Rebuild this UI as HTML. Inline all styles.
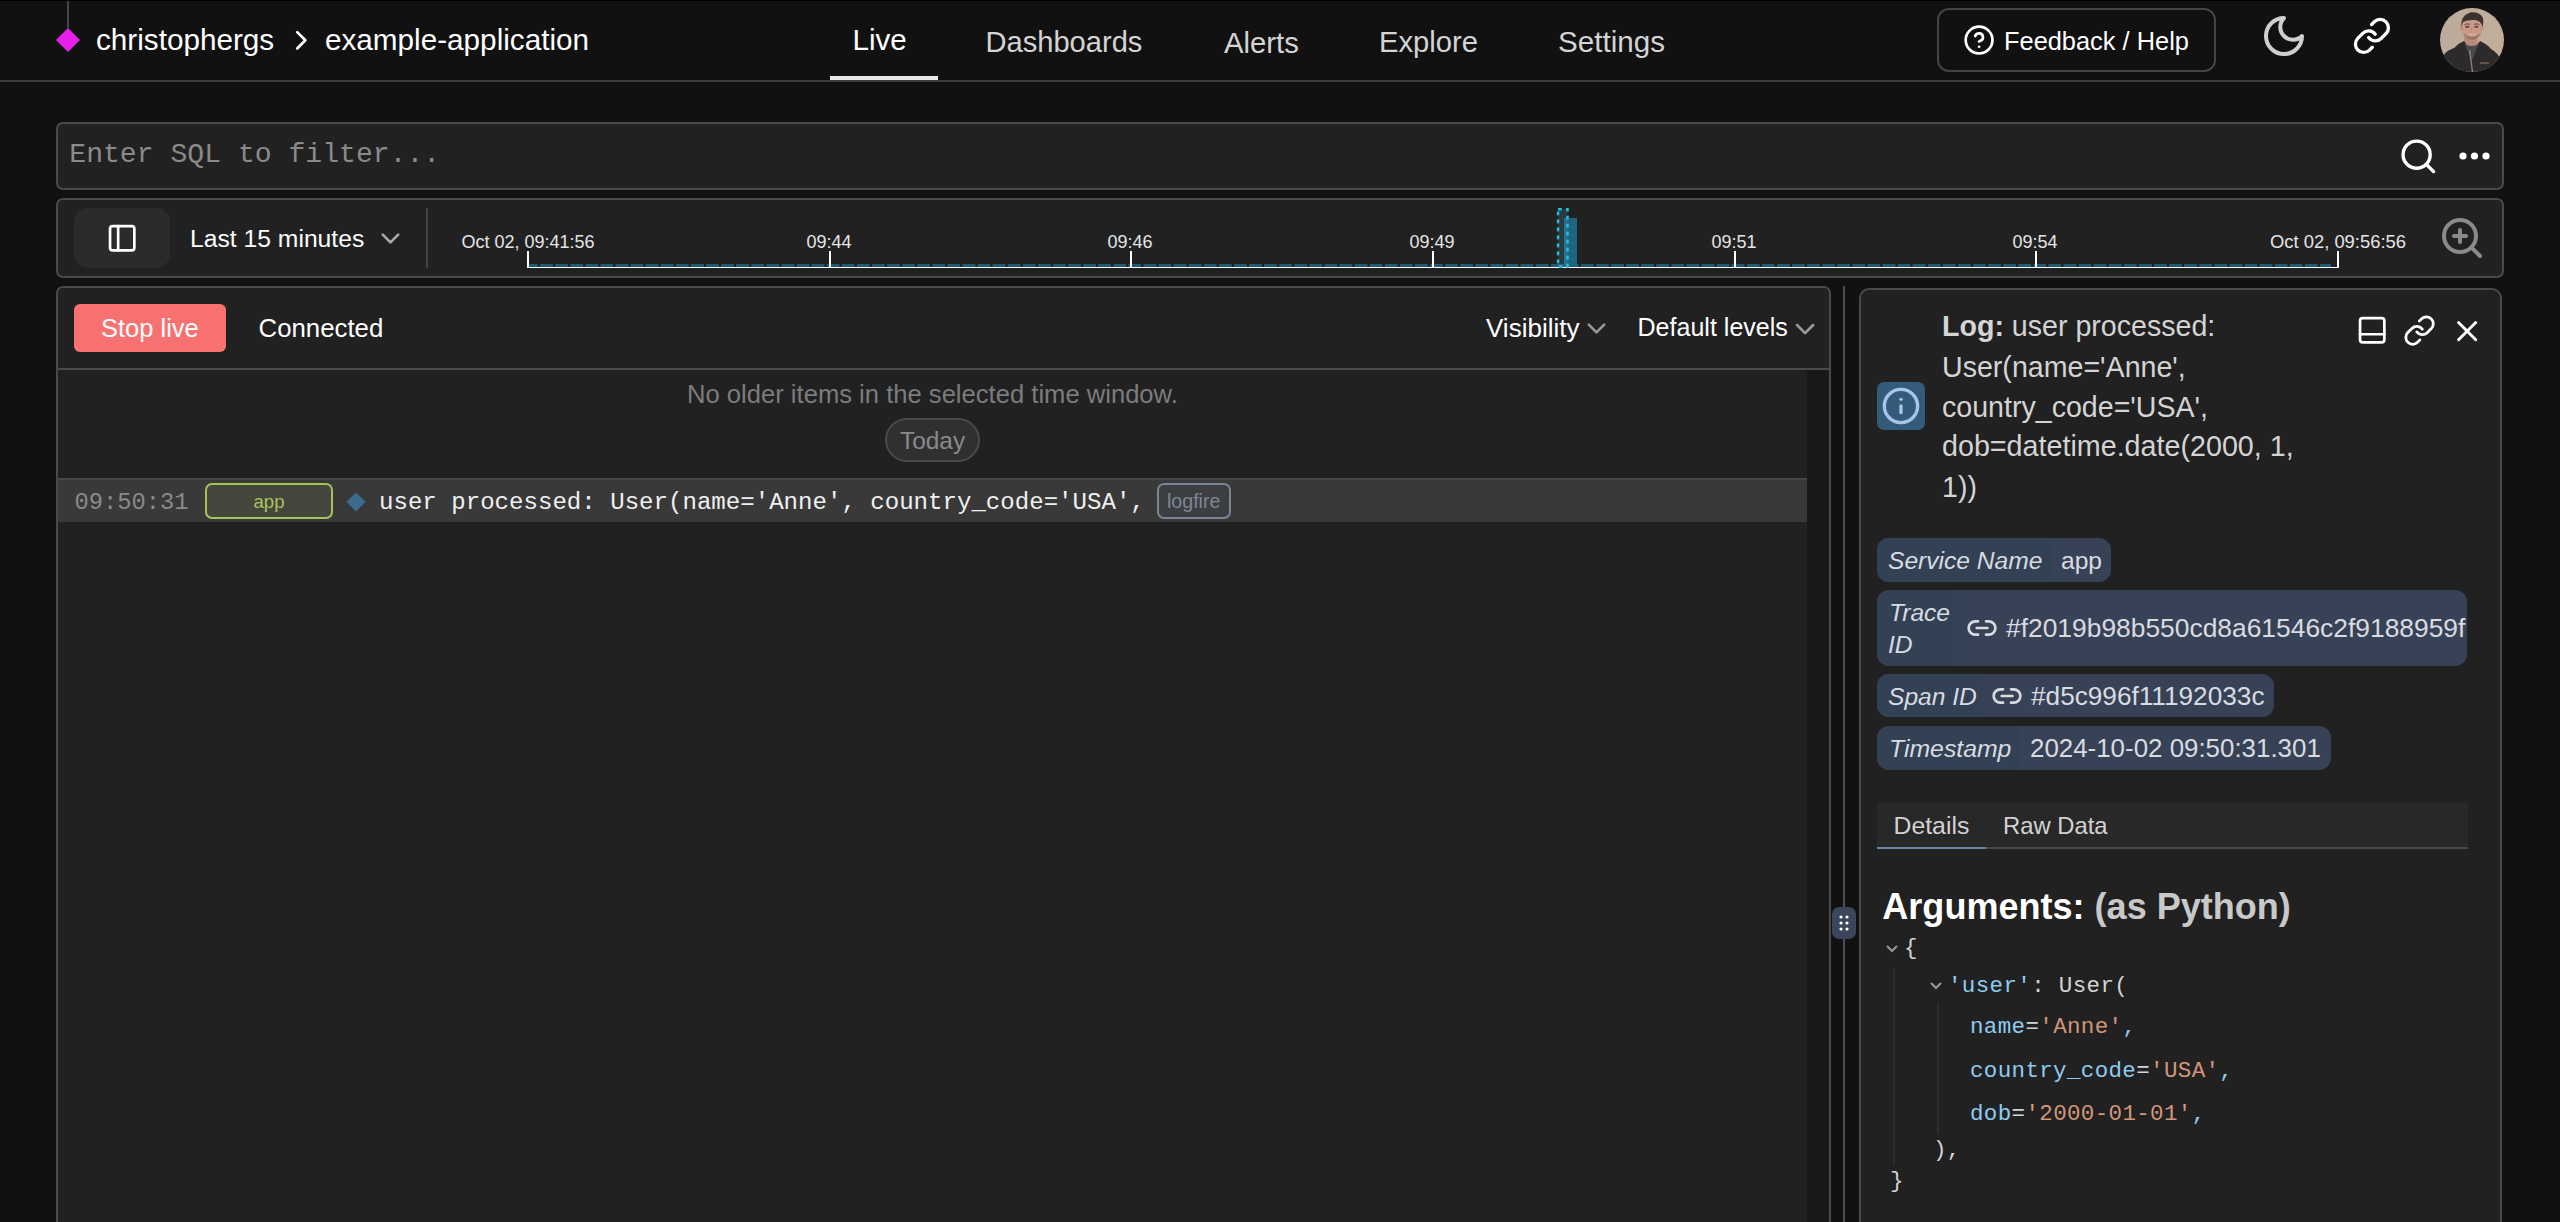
<!DOCTYPE html>
<html><head><meta charset="utf-8"><style>
html,body{margin:0;padding:0;width:2560px;height:1222px;overflow:hidden;background:#111111;}
.r{position:absolute;box-sizing:content-box}
.t{position:absolute;line-height:1;white-space:pre}
.S{font-family:"Liberation Sans",sans-serif}
.M{font-family:"Liberation Mono",monospace}
</style></head><body>
<div class="r" style="left:0px;top:0px;width:2560px;height:1px;background:#000"></div>
<div class="r" style="left:0px;top:80px;width:2560px;height:2px;background:#3c3c3c"></div>
<div class="r" style="left:67px;top:1px;width:2px;height:27px;background:#474747"></div>
<svg class="r" style="left:55px;top:27px" width="26" height="26" viewBox="0 0 26 26" fill="none"><path d="M13 1 L25 13 L13 25 L1 13 Z" fill="#e620ea"/></svg>
<div class="t S" style="left:96px;top:24.85px;font-size:29.7px;color:#fff;font-weight:400;font-style:normal;">christophergs</div>
<svg class="r" style="left:284.60px;top:24.20px" width="32.57" height="32.57" viewBox="0 0 24 24" fill="none" stroke="#fff" stroke-width="2" stroke-linecap="round" stroke-linejoin="round"><path d="m9 18 6-6-6-6"/></svg>
<div class="t S" style="left:325px;top:25.35px;font-size:29.7px;color:#fff;font-weight:400;font-style:normal;">example-application</div>
<div class="t S" style="left:852.5px;top:24.54px;font-size:29.6px;color:#fff;font-weight:400;font-style:normal;">Live</div>
<div class="r" style="left:830px;top:76px;width:108px;height:4px;background:#e5e7eb"></div>
<div class="t S" style="left:985.5px;top:27.86px;font-size:29.1px;color:#d4d4d4;font-weight:400;font-style:normal;">Dashboards</div>
<div class="t S" style="left:1224px;top:27.69px;font-size:29.3px;color:#d4d4d4;font-weight:400;font-style:normal;">Alerts</div>
<div class="t S" style="left:1379px;top:27.78px;font-size:29.2px;color:#d4d4d4;font-weight:400;font-style:normal;">Explore</div>
<div class="t S" style="left:1558px;top:27.44px;font-size:29.6px;color:#d4d4d4;font-weight:400;font-style:normal;">Settings</div>
<div class="r" style="left:1937px;top:8px;width:275px;height:60px;border:2px solid #444;border-radius:12px"></div>
<svg class="r" style="left:1963.20px;top:23.70px" width="32.16" height="32.16" viewBox="0 0 24 24" fill="none" stroke="#fff" stroke-width="2" stroke-linecap="round" stroke-linejoin="round"><circle cx="12" cy="12" r="10"/><path d="M9.09 9a3 3 0 0 1 5.83 1c0 2-3 3-3 3"/><path d="M12 17h.01"/></svg>
<div class="t S" style="left:2004px;top:28.69px;font-size:25.4px;color:#fff;font-weight:400;font-style:normal;">Feedback / Help</div>
<svg class="r" style="left:2260.00px;top:12.00px" width="48.00" height="48.00" viewBox="0 0 24 24" fill="none" stroke="#cfcfcf" stroke-width="2" stroke-linecap="round" stroke-linejoin="round"><path d="M12 3a6 6 0 0 0 9 9 9 9 0 1 1-9-9Z"/></svg>
<svg class="r" style="left:2352.00px;top:15.75px" width="39.84" height="39.84" viewBox="0 0 24 24" fill="none" stroke="#fff" stroke-width="2" stroke-linecap="round" stroke-linejoin="round"><path d="M10 13a5 5 0 0 0 7.54.54l3-3a5 5 0 0 0-7.07-7.07l-1.72 1.71"/><path d="M14 11a5 5 0 0 0-7.54-.54l-3 3a5 5 0 0 0 7.07 7.07l1.71-1.71"/></svg>
<svg class="r" style="left:2440px;top:8px" width="64" height="64" viewBox="0 0 64 64" fill="none"><defs><clipPath id="av"><circle cx="32" cy="32" r="32"/></clipPath><linearGradient id="bg" x1="0" y1="0" x2="1" y2="0"><stop offset="0" stop-color="#bcab9b"/><stop offset="1" stop-color="#c2ae9b"/></linearGradient></defs><g clip-path="url(#av)">
<rect width="64" height="64" fill="url(#bg)"/>
<path d="M24 27 L24 38 Q31 41 38 37 L37 27 Z" fill="#b98a78"/>
<path d="M22 17 Q22 10 32 10 Q42 10 42 17 L41.5 25 Q40 31 32 32 Q24 31 22.5 25 Z" fill="#c99a88"/>
<path d="M23 24 Q25 31 32 32 Q39 31 41 24 Q39 28 32 29 Q25 28 23 24 Z" fill="#8a6a5c" opacity="0.8"/>
<ellipse cx="21.6" cy="20" rx="1.7" ry="2.8" fill="#c08f7d"/><ellipse cx="42.2" cy="20" rx="1.7" ry="2.8" fill="#c08f7d"/>
<path d="M21.5 19 Q20 8 30 4.5 Q40 3.5 43 10 Q44 14 42.5 19 Q41 12.5 35 12 Q27 11.5 23 14 Z" fill="#3b332f"/>
<path d="M27 25.5 Q32 28 37 25.5 Q32 27 27 25.5 Z" fill="#f0e0d8" opacity="0.8"/>
<ellipse cx="27.3" cy="18.8" rx="2.2" ry="1" fill="#5a4038"/><ellipse cx="36.3" cy="18.8" rx="2.1" ry="1" fill="#5a4038"/><path d="M24.5 16.5 Q27 15.3 30 16.3 M34 16.3 Q37 15.3 39.5 16.5" stroke="#5b4a42" stroke-width="1"/><path d="M32 19 L31 24" stroke="#b08070" stroke-width="0.8"/>
<path d="M0 64 L2 50 Q5 43 14 40 Q19 35 24 33 L32 44 L40 33 Q47 36 51 41 Q58 45 61 52 L64 64 Z" fill="#2d2a2b"/>
<path d="M24.5 36 L32 52 L38.5 36 Q32 40 24.5 36 Z" fill="#4a4a4c"/>
<path d="M29.5 42 L32.5 64" stroke="#8c8378" stroke-width="1.4"/>
<rect x="40" y="54" width="9" height="2" fill="#7a6456" opacity="0.7"/>
</g></svg>
<div class="r" style="left:56px;top:122px;width:2444px;height:64px;background:#212121;border:2px solid #4a4a4a;border-radius:7px"></div>
<div class="t M" style="left:69.3px;top:140.97px;font-size:28.1px;color:#8a8a8a;font-weight:400;font-style:normal;">Enter SQL to filter...</div>
<svg class="r" style="left:2397.60px;top:135.60px" width="40.66" height="40.66" viewBox="0 0 24 24" fill="none" stroke="#fff" stroke-width="2" stroke-linecap="round" stroke-linejoin="round"><circle cx="11" cy="11" r="8"/><path d="m21 21-4.3-4.3"/></svg>
<svg class="r" style="left:2456.5px;top:150px" width="38" height="12" viewBox="0 0 38 12" fill="none"><circle cx="6" cy="6" r="3.6" fill="#fff"/><circle cx="17.5" cy="6" r="3.6" fill="#fff"/><circle cx="29" cy="6" r="3.6" fill="#fff"/></svg>
<div class="r" style="left:56px;top:198px;width:2444px;height:76px;background:#212121;border:2px solid #4a4a4a;border-radius:7px"></div>
<div class="r" style="left:74px;top:208px;width:96px;height:60px;background:#2b2b2b;border-radius:14px"></div>
<svg class="r" style="left:105.70px;top:222.30px" width="32.40" height="32.40" viewBox="0 0 24 24" fill="none" stroke="#fff" stroke-width="2" stroke-linecap="round" stroke-linejoin="round"><rect width="18" height="18" x="3" y="3" rx="2"/><path d="M9 3v18"/></svg>
<div class="t S" style="left:190px;top:227.09px;font-size:24.7px;color:#fff;font-weight:400;font-style:normal;">Last 15 minutes</div>
<svg class="r" style="left:375.45px;top:222.50px" width="30.96" height="30.96" viewBox="0 0 24 24" fill="none" stroke="#aaa" stroke-width="2" stroke-linecap="round" stroke-linejoin="round"><path d="m6 9 6 6 6-6"/></svg>
<div class="r" style="left:426px;top:208px;width:2px;height:60px;background:#444"></div>
<svg class="r" style="left:520px;top:200px" width="1830" height="75"><line x1="9" y1="65.5" x2="1811" y2="65.5" stroke="#1f5b72" stroke-width="3" stroke-dasharray="12.9 2.183" stroke-dashoffset="3.98"/><rect x="1044" y="18" width="13" height="49" fill="#1d6480"/><line x1="8" y1="67.5" x2="1819" y2="67.5" stroke="#fff" stroke-width="1"/><line x1="8" y1="51" x2="8" y2="68" stroke="#fff" stroke-width="2"/><line x1="310" y1="51" x2="310" y2="68" stroke="#fff" stroke-width="2"/><line x1="611" y1="51" x2="611" y2="68" stroke="#fff" stroke-width="2"/><line x1="913" y1="51" x2="913" y2="68" stroke="#fff" stroke-width="2"/><line x1="1215" y1="51" x2="1215" y2="68" stroke="#fff" stroke-width="2"/><line x1="1516" y1="51" x2="1516" y2="68" stroke="#fff" stroke-width="2"/><line x1="1818" y1="51" x2="1818" y2="68" stroke="#fff" stroke-width="2"/><rect x="1038.05" y="9.25" width="9.5" height="57.5" stroke="#20c0e0" stroke-width="2.5" stroke-dasharray="3.7 4.3" fill="rgba(78,163,198,0.2)"/></svg>
<div class="t S" style="left:461.5px;top:233.16px;font-size:18px;color:#e5e5e5;font-weight:400;font-style:normal;">Oct 02, 09:41:56</div>
<div class="t S" style="left:806.5px;top:233.16px;font-size:18px;color:#e5e5e5;font-weight:400;font-style:normal;">09:44</div>
<div class="t S" style="left:1107.5px;top:233.16px;font-size:18px;color:#e5e5e5;font-weight:400;font-style:normal;">09:46</div>
<div class="t S" style="left:1409.5px;top:233.16px;font-size:18px;color:#e5e5e5;font-weight:400;font-style:normal;">09:49</div>
<div class="t S" style="left:1711.5px;top:233.16px;font-size:18px;color:#e5e5e5;font-weight:400;font-style:normal;">09:51</div>
<div class="t S" style="left:2012.5px;top:233.16px;font-size:18px;color:#e5e5e5;font-weight:400;font-style:normal;">09:54</div>
<div class="t S" style="left:2270px;top:232.82px;font-size:18.4px;color:#e5e5e5;font-weight:400;font-style:normal;">Oct 02, 09:56:56</div>
<svg class="r" style="left:2438.00px;top:213.80px" width="48.00" height="48.00" viewBox="0 0 24 24" fill="none" stroke="#8a8a8a" stroke-width="2" stroke-linecap="round" stroke-linejoin="round"><circle cx="11" cy="11" r="8"/><line x1="21" x2="16.65" y1="21" y2="16.65"/><line x1="11" x2="11" y1="8" y2="14"/><line x1="8" x2="14" y1="11" y2="11"/></svg>
<div class="r" style="left:56px;top:286px;width:1771px;height:960px;background:#212121;border:2px solid #4a4a4a;border-radius:7px"></div>
<div class="r" style="left:58px;top:368px;width:1771px;height:2px;background:#4a4a4a"></div>
<div class="r" style="left:1807px;top:370px;width:22px;height:852px;background:#181818"></div>
<div class="r" style="left:74px;top:304px;width:152px;height:48px;background:#f87171;border-radius:6px"></div>
<div class="t S" style="left:101px;top:315.61px;font-size:25.5px;color:#fff;font-weight:400;font-style:normal;">Stop live</div>
<div class="t S" style="left:258.5px;top:315.66px;font-size:25.8px;color:#fff;font-weight:400;font-style:normal;">Connected</div>
<div class="t S" style="left:1486px;top:314.59px;font-size:26px;color:#fff;font-weight:400;font-style:normal;">Visibility</div>
<svg class="r" style="left:1581.05px;top:313.10px" width="30.96" height="30.96" viewBox="0 0 24 24" fill="none" stroke="#999" stroke-width="2" stroke-linecap="round" stroke-linejoin="round"><path d="m6 9 6 6 6-6"/></svg>
<div class="t S" style="left:1637.5px;top:315.39px;font-size:25.05px;color:#fff;font-weight:400;font-style:normal;">Default levels</div>
<svg class="r" style="left:1788.60px;top:313.10px" width="32.16" height="32.16" viewBox="0 0 24 24" fill="none" stroke="#999" stroke-width="2" stroke-linecap="round" stroke-linejoin="round"><path d="m6 9 6 6 6-6"/></svg>
<div class="t S" style="left:687px;top:382.42px;font-size:25.6px;color:#7c7c7c;font-weight:400;font-style:normal;">No older items in the selected time window.</div>
<div class="r" style="left:885px;top:418px;width:91px;height:40px;background:#303030;border:2px solid #4a4a4a;border-radius:22px"></div>
<div class="t S" style="left:900px;top:429.44px;font-size:24.4px;color:#8a8a8a;font-weight:400;font-style:normal;">Today</div>
<div class="r" style="left:58px;top:478px;width:1749px;height:44px;background:#393939"></div>
<div class="r" style="left:58px;top:478px;width:1749px;height:2px;background:#474747"></div>
<div class="t M" style="left:74.5px;top:491.21px;font-size:23.75px;color:#8a8a8a;font-weight:400;font-style:normal;">09:50:31</div>
<div class="r" style="left:205px;top:483px;width:124px;height:32px;background:#45463c;border:2px solid #a6c35a;border-radius:7px"></div>
<div class="t S" style="left:253.5px;top:492.75px;font-size:18.6px;color:#a8c25f;font-weight:400;font-style:normal;">app</div>
<svg class="r" style="left:345px;top:491px" width="22" height="22" viewBox="0 0 22 22" fill="none"><path d="M11 1.5 L20.5 11 L11 20.5 L1.5 11 Z" fill="#3b6b8e"/></svg>
<div class="t M" style="left:379px;top:490.95px;font-size:24.08px;color:#f0f0f0;font-weight:400;font-style:normal;">user processed: User(name='Anne', country_code='USA',</div>
<div class="r" style="left:1157px;top:483px;width:70px;height:32px;background:#3d3e41;border:2px solid #7a8494;border-radius:7px"></div>
<div class="t S" style="left:1167px;top:491.90px;font-size:19.6px;color:#7f8794;font-weight:400;font-style:normal;">logfire</div>
<div class="r" style="left:1843px;top:286px;width:2px;height:936px;background:#4d4d4d"></div>
<div class="r" style="left:1832px;top:907px;width:24px;height:32px;background:#3a465c;border-radius:7px"></div>
<svg class="r" style="left:1832px;top:907px" width="24" height="32" viewBox="0 0 24 32" fill="none"><g fill="#fff"><circle cx="9" cy="10" r="1.6"/><circle cx="15" cy="10" r="1.6"/><circle cx="9" cy="16" r="1.6"/><circle cx="15" cy="16" r="1.6"/><circle cx="9" cy="22" r="1.6"/><circle cx="15" cy="22" r="1.6"/></g></svg>
<div class="r" style="left:1859px;top:288px;width:1640px;height:960px;background:#212121;border:2px solid #4a4a4a;border-radius:10px;width:639px"></div>
<div class="r" style="left:1877px;top:382px;width:48px;height:48px;background:#345b79;border-radius:7px"></div>
<svg class="r" style="left:1881.00px;top:386.00px" width="39.94" height="39.94" viewBox="0 0 24 24" fill="none" stroke="#a8c4ec" stroke-width="2" stroke-linecap="round" stroke-linejoin="round"><circle cx="12" cy="12" r="10"/><path d="M12 16v-4"/><path d="M12 8h.01"/></svg>
<div class="t S" style="left:1942px;top:312.48px;font-size:28.6px;color:#d4d4d4;font-weight:400;font-style:normal;"><b>Log:</b> user processed:</div>
<div class="t S" style="left:1942px;top:352.68px;font-size:28.6px;color:#d4d4d4;font-weight:400;font-style:normal;">User(name='Anne',</div>
<div class="t S" style="left:1942px;top:392.88px;font-size:28.6px;color:#d4d4d4;font-weight:400;font-style:normal;">country_code='USA',</div>
<div class="t S" style="left:1942px;top:432.20px;font-size:28.7px;color:#d4d4d4;font-weight:400;font-style:normal;">dob=datetime.date(2000, 1,</div>
<div class="t S" style="left:1942px;top:472.68px;font-size:28.6px;color:#d4d4d4;font-weight:400;font-style:normal;">1))</div>
<svg class="r" style="left:2355.60px;top:313.90px" width="32.40" height="32.40" viewBox="0 0 24 24" fill="none" stroke="#fff" stroke-width="2" stroke-linecap="round" stroke-linejoin="round"><rect width="18" height="18" x="3" y="3" rx="2"/><path d="M3 15h18"/></svg>
<svg class="r" style="left:2403.20px;top:314.10px" width="33.12" height="33.12" viewBox="0 0 24 24" fill="none" stroke="#fff" stroke-width="2" stroke-linecap="round" stroke-linejoin="round"><path d="M10 13a5 5 0 0 0 7.54.54l3-3a5 5 0 0 0-7.07-7.07l-1.72 1.71"/><path d="M14 11a5 5 0 0 0-7.54-.54l-3 3a5 5 0 0 0 7.07 7.07l1.71-1.71"/></svg>
<svg class="r" style="left:2450.20px;top:313.60px" width="34.32" height="34.32" viewBox="0 0 24 24" fill="none" stroke="#fff" stroke-width="2" stroke-linecap="round" stroke-linejoin="round"><path d="M18 6 6 18"/><path d="m6 6 12 12"/></svg>
<div class="r" style="left:1877px;top:538px;width:234px;height:44px;background:#384256;border-radius:12px;overflow:hidden"><div style="position:absolute;left:0;top:0;bottom:0;width:175px;background:#334155"></div></div>
<div class="t S" style="left:1888px;top:548.57px;font-size:24.6px;color:#d8dbe0;font-weight:400;font-style:italic;">Service Name</div>
<div class="t S" style="left:2061px;top:548.57px;font-size:24.6px;color:#d8dbe0;font-weight:400;font-style:normal;">app</div>
<div class="r" style="left:1877px;top:590px;width:590px;height:76px;background:#384256;border-radius:12px;overflow:hidden"><div style="position:absolute;left:0;top:0;bottom:0;width:81px;background:#334155"></div></div>
<div class="t S" style="left:1889px;top:601.07px;font-size:24.6px;color:#d8dbe0;font-weight:400;font-style:italic;">Trace</div>
<div class="t S" style="left:1888px;top:633.07px;font-size:24.6px;color:#d8dbe0;font-weight:400;font-style:italic;">ID</div>
<svg class="r" style="left:1965.70px;top:612.00px" width="32.06" height="32.06" viewBox="0 0 24 24" fill="none" stroke="#d8dbe0" stroke-width="2" stroke-linecap="round" stroke-linejoin="round"><path d="M9 17H7A5 5 0 0 1 7 7h2"/><path d="M15 7h2a5 5 0 1 1 0 10h-2"/><line x1="8" x2="16" y1="12" y2="12"/></svg>
<div class="t S" style="left:2006px;top:615.05px;font-size:26.4px;color:#d8dbe0;font-weight:400;font-style:normal;">#f2019b98b550cd8a61546c2f9188959f</div>
<div class="r" style="left:1877px;top:674px;width:397px;height:43px;background:#384256;border-radius:12px;overflow:hidden"><div style="position:absolute;left:0;top:0;bottom:0;width:106px;background:#334155"></div></div>
<div class="t S" style="left:1888px;top:684.77px;font-size:24.6px;color:#d8dbe0;font-weight:400;font-style:italic;">Span ID</div>
<svg class="r" style="left:1991.00px;top:680.00px" width="32.06" height="32.06" viewBox="0 0 24 24" fill="none" stroke="#d8dbe0" stroke-width="2" stroke-linecap="round" stroke-linejoin="round"><path d="M9 17H7A5 5 0 0 1 7 7h2"/><path d="M15 7h2a5 5 0 1 1 0 10h-2"/><line x1="8" x2="16" y1="12" y2="12"/></svg>
<div class="t S" style="left:2031px;top:682.82px;font-size:26.2px;color:#d8dbe0;font-weight:400;font-style:normal;">#d5c996f11192033c</div>
<div class="r" style="left:1877px;top:726px;width:454px;height:44px;background:#384256;border-radius:12px;overflow:hidden"><div style="position:absolute;left:0;top:0;bottom:0;width:144px;background:#334155"></div></div>
<div class="t S" style="left:1889px;top:736.50px;font-size:24.8px;color:#d8dbe0;font-weight:400;font-style:italic;">Timestamp</div>
<div class="t S" style="left:2030px;top:735.57px;font-size:25.9px;color:#d8dbe0;font-weight:400;font-style:normal;">2024-10-02 09:50:31.301</div>
<div class="r" style="left:1877px;top:802px;width:591px;height:46px;background:#282828"></div>
<div class="r" style="left:1877px;top:847px;width:591px;height:2px;background:#484848"></div>
<div class="r" style="left:1877px;top:847px;width:109px;height:2px;background:#6f84a8"></div>
<div class="t S" style="left:1893.5px;top:814.40px;font-size:24.8px;color:#d2d2d2;font-weight:400;font-style:normal;">Details</div>
<div class="t S" style="left:2003px;top:813.65px;font-size:23.8px;color:#d2d2d2;font-weight:400;font-style:normal;">Raw Data</div>
<div class="t S" style="left:1882.3px;top:888.68px;font-size:36.05px;color:#fff;font-weight:700;font-style:normal;">Arguments: <span style="color:#c9c9c9">(as Python)</span></div>
<svg class="r" style="left:1884px;top:942px" width="16" height="14" viewBox="0 0 16 14" fill="none"><path d="M3 4 L8 9 L13 4" stroke="#999" stroke-width="2" fill="none"/></svg>
<svg class="r" style="left:1928px;top:978.5px" width="16" height="14" viewBox="0 0 16 14" fill="none"><path d="M3 4 L8 9 L13 4" stroke="#999" stroke-width="2" fill="none"/></svg>
<div class="r" style="left:1893px;top:969px;width:2px;height:196px;background:#2c2b38"></div>
<div class="r" style="left:1937px;top:1004px;width:2px;height:130px;background:#2c2b38"></div>
<div class="t M" style="left:1904px;top:936.76px;font-size:22.5px;color:#d4d4d4;font-weight:400;font-style:normal;letter-spacing:0.35px;">{</div>
<div class="t M" style="left:1948px;top:974.56px;font-size:22.5px;color:#d4d4d4;font-weight:400;font-style:normal;letter-spacing:0.35px;"><span style="color:#8fcbf0">'user'</span>: User(</div>
<div class="t M" style="left:1970px;top:1016.06px;font-size:22.5px;color:#d4d4d4;font-weight:400;font-style:normal;letter-spacing:0.35px;"><span style="color:#8fcbf0">name</span>=<span style="color:#d3967a">'Anne'</span><span style="color:#8fcbf0">,</span></div>
<div class="t M" style="left:1970px;top:1060.46px;font-size:22.5px;color:#d4d4d4;font-weight:400;font-style:normal;letter-spacing:0.35px;"><span style="color:#8fcbf0">country_code</span>=<span style="color:#d3967a">'USA'</span><span style="color:#8fcbf0">,</span></div>
<div class="t M" style="left:1970px;top:1102.76px;font-size:22.5px;color:#d4d4d4;font-weight:400;font-style:normal;letter-spacing:0.35px;"><span style="color:#8fcbf0">dob</span>=<span style="color:#d3967a">'2000-01-01'</span><span style="color:#8fcbf0">,</span></div>
<div class="t M" style="left:1933px;top:1139.26px;font-size:22.5px;color:#d4d4d4;font-weight:400;font-style:normal;letter-spacing:0.35px;">),</div>
<div class="t M" style="left:1890px;top:1169.56px;font-size:22.5px;color:#d4d4d4;font-weight:400;font-style:normal;letter-spacing:0.35px;">}</div>
</body></html>
